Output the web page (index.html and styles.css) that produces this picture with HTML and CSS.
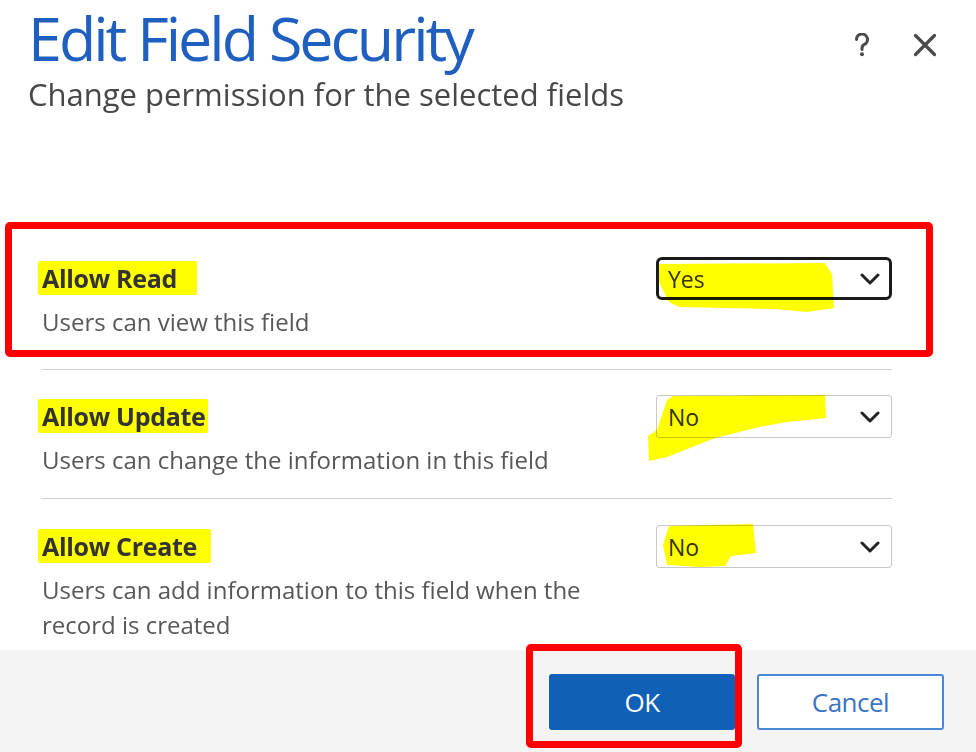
FILE: index.html
```html
<!DOCTYPE html>
<html lang="en">
<head>
<meta charset="utf-8">
<title>Edit Field Security</title>
<link rel="stylesheet" href="styles.css">
</head>
<body>
<div class="dialog">
  <header class="header">
    <div class="titles">
      <h1 class="title">Edit Field Security</h1>
      <p class="subtitle">Change permission for the selected fields</p>
    </div>
    <div class="header-icons">
      <svg class="icon-help" width="16" height="24" viewBox="0 0 16 24"><path d="M2.5 6.5 A5.5 5.5 0 1 1 10 11.6 C8.4 12.5 8 13.5 8 15.5 V16.5" fill="none" stroke="#4a4a4a" stroke-width="3" stroke-linecap="round"/><circle cx="8" cy="21.3" r="2" fill="#4a4a4a"/></svg>
      <svg class="icon-close" width="24" height="24" viewBox="0 0 24 24"><path d="M2.5 2.5 L21.5 21.5 M21.5 2.5 L2.5 21.5" stroke="#4a4a4a" stroke-width="3.2" stroke-linecap="round"/></svg>
    </div>
  </header>

  <main class="fields">
    <section class="field field-marked">
      <div class="field-text">
        <div class="field-label"><span class="hl hl-read">Allow Read</span></div>
        <div class="field-desc">Users can view this field</div>
      </div>
      <div class="select select-focus">
        <span class="select-value">Yes</span>
        <svg class="chevron" width="20" height="12" viewBox="0 0 20 12"><path d="M2 2 L10 10 L18 2" fill="none" stroke="#222" stroke-width="3" stroke-linecap="round" stroke-linejoin="round"/></svg>
        <svg class="marker" width="190" height="60" viewBox="0 0 190 60" style="left:-4px;top:0px"><path d="M2 4 L170 3 L177 14 L179 48 L152 52 L120 49 L24 47 L14 42 L4 22 Z" fill="#ffff00"/></svg>
      </div>
    </section>

    <section class="field field-row">
      <div class="field-text">
        <div class="field-label"><span class="hl hl-update">Allow Update</span></div>
        <div class="field-desc">Users can change the information in this field</div>
      </div>
      <div class="select">
        <span class="select-value">No</span>
        <svg class="chevron" width="20" height="12" viewBox="0 0 20 12"><path d="M2 2 L10 10 L18 2" fill="none" stroke="#222" stroke-width="3" stroke-linecap="round" stroke-linejoin="round"/></svg>
        <svg class="marker" width="190" height="70" viewBox="0 0 190 70" style="left:-10px;top:-2px"><path d="M26 2 L178 1 L179 24 L140 28 L112 33 L68 44 L20 63 L2 67 L1 42 L10 36 L20 6 Z" fill="#ffff00"/></svg>
      </div>
    </section>

    <section class="field field-row">
      <div class="field-text">
        <div class="field-label"><span class="hl hl-create">Allow Create</span></div>
        <div class="field-desc">Users can add information to this field when the record is created</div>
      </div>
      <div class="select">
        <span class="select-value">No</span>
        <svg class="chevron" width="20" height="12" viewBox="0 0 20 12"><path d="M2 2 L10 10 L18 2" fill="none" stroke="#222" stroke-width="3" stroke-linecap="round" stroke-linejoin="round"/></svg>
        <svg class="marker" width="110" height="50" viewBox="0 0 110 50" style="left:2px;top:-3px"><path d="M10 3 L94 1 L97 30 L72 33 L66 43 L40 44 L8 42 L4 22 Z" fill="#ffff00"/></svg>
      </div>
    </section>
  </main>

  <footer class="footer">
    <button class="btn btn-primary">OK</button>
    <button class="btn btn-secondary">Cancel</button>
    <div class="annotation-ok"></div>
  </footer>
</div>
</body>
</html>
```
FILE: styles.css
```css
* { box-sizing: border-box; }

html, body {
  margin: 0;
  padding: 0;
  background: #ffffff;
}

body {
  width: 976px;
  height: 752px;
  overflow: hidden;
  font-family: "Open Sans", "Noto Sans", sans-serif;
}

.dialog {
  width: 976px;
  height: 752px;
  display: flex;
  flex-direction: column;
}

/* Header */
.header {
  display: flex;
  justify-content: space-between;
  align-items: flex-start;
  padding: 1px 39px 0 28px;
  height: 222px;
}

.title {
  margin: 0;
  font-size: 61px;
  line-height: 74px;
  font-weight: 400;
  color: #1f5fc0;
  letter-spacing: -3px;
}

.subtitle {
  margin: 0;
  font-size: 31px;
  line-height: 38px;
  color: #474747;
  letter-spacing: 0;
}

.header-icons {
  display: flex;
  align-items: center;
  gap: 43px;
  margin-top: 32px;
}

/* Fields */
.fields {
  padding: 0 84px 0 42px;
}

.field {
  display: grid;
  grid-template-columns: 1fr 236px;
  align-items: start;
}

.field-marked {
  margin: 0 -41px 0 -37px;
  border: 7px solid #ff0000;
  border-radius: 5px;
  padding: 28px 34px 11px 30px;
  margin-bottom: 12px;
}

.field-row {
  border-top: 1px solid #cfcfcf;
  padding: 25px 0 21px 0;
}

.field-row:last-child {
  padding: 26px 0 8px 0;
}

.field-text {
  margin-top: 4px;
}

.field-label {
  font-size: 25px;
  line-height: 34px;
  font-weight: 700;
  color: #333333;
  letter-spacing: -0.3px;
}

.hl {
  display: inline-block;
  background: #ffff00;
  margin-left: -4px;
  padding: 0 14px 0 4px;
  border-radius: 2px;
}

.hl-read { padding-right: 20px; }
.hl-create { padding-right: 14px; }
.hl-update { padding-right: 2px; }

.field-desc {
  margin-top: 9px;
  font-size: 24px;
  line-height: 35px;
  color: #575757;
  letter-spacing: 0;
  max-width: 560px;
}

/* Select */
.select {
  position: relative;
  height: 43px;
  border: 1px solid #c8c8c8;
  border-radius: 3px;
  display: flex;
  align-items: center;
  justify-content: space-between;
  padding: 0 11px 0 11px;
  background: #ffffff;
}

.select-focus {
  border: 3px solid #1a1a1a;
  border-radius: 6px;
  padding: 0 9px 0 9px;
}

.select-value {
  font-size: 23px;
  color: #333333;
}

.chevron {
  display: block;
}

.marker {
  position: absolute;
  mix-blend-mode: multiply;
  pointer-events: none;
}

/* Footer */
.footer {
  position: relative;
  flex: 1;
  background: #f4f4f4;
  display: flex;
  justify-content: flex-end;
  align-items: flex-start;
  gap: 22px;
  padding: 24px 32px 0 0;
}

.btn {
  width: 187px;
  height: 56px;
  border-radius: 3px;
  font-family: "Open Sans", "Noto Sans", sans-serif;
  font-size: 26px;
  letter-spacing: -0.5px;
  cursor: pointer;
}

.btn-primary {
  background: #1160b8;
  color: #ffffff;
  border: none;
  width: 186px;
}

.btn-secondary {
  background: #ffffff;
  color: #3a74c2;
  border: 2px solid #4a88d6;
}

.annotation-ok {
  position: absolute;
  left: 526px;
  top: -6px;
  width: 216px;
  height: 104px;
  border: 7px solid #ff0000;
  border-radius: 5px;
  pointer-events: none;
}
```
